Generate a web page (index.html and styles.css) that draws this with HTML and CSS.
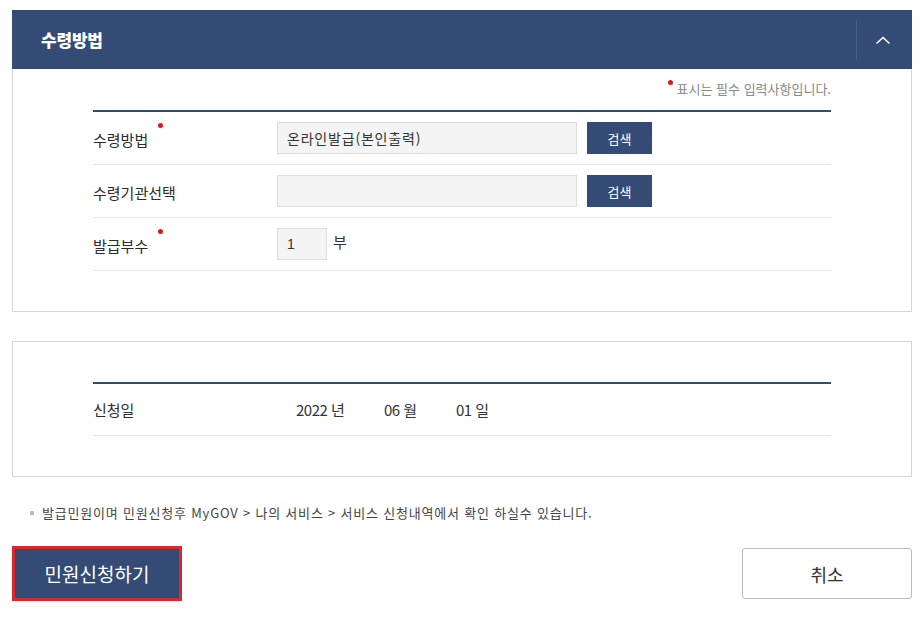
FILE: index.html
```html
<!DOCTYPE html>
<html lang="ko">
<head>
<meta charset="utf-8">
<link rel="stylesheet" href="styles.css">
</head>
<body>
<div class="page">
  <section class="panel">
    <div class="panel-head">
      <h2 class="panel-title">수령방법</h2>
      <div class="toggle">
        <svg width="16" height="10" viewBox="0 0 16 10"><polyline points="1.5,8.5 8,2.5 14.5,8.5" fill="none" stroke="#ffffff" stroke-width="1.6"/></svg>
      </div>
    </div>
    <div class="panel-body">
      <p class="req-note"><span class="dot"></span>표시는 필수 입력사항입니다.</p>
      <div class="form-table">
        <div class="row">
          <div class="label"><span>수령방법</span><span class="dot"></span></div>
          <div class="field">
            <div class="input wide">온라인발급(본인출력)</div>
            <button class="btn-search">검색</button>
          </div>
        </div>
        <div class="row">
          <div class="label"><span>수령기관선택</span></div>
          <div class="field">
            <div class="input wide"></div>
            <button class="btn-search">검색</button>
          </div>
        </div>
        <div class="row">
          <div class="label"><span>발급부수</span><span class="dot"></span></div>
          <div class="field">
            <div class="input small">1</div>
            <span class="unit">부</span>
          </div>
        </div>
      </div>
    </div>
  </section>

  <section class="panel boxed">
    <div class="form-table">
      <div class="row date-row">
        <div class="label"><span>신청일</span></div>
        <div class="field date">
          <span class="dpart y">2022 년</span>
          <span class="dpart m">06 월</span>
          <span class="dpart d">01 일</span>
        </div>
      </div>
    </div>
  </section>

  <p class="info"><span class="sq"></span>발급민원이며 민원신청후 MyGOV &gt; 나의 서비스 &gt; 서비스 신청내역에서 확인 하실수 있습니다.</p>

  <div class="actions">
    <button class="btn-primary">민원신청하기</button>
    <button class="btn-cancel">취소</button>
  </div>
</div>
</body>
</html>
```
FILE: styles.css
```css
* { box-sizing: border-box; }
html, body { margin: 0; padding: 0; background: #ffffff; }
body {
  font-family: "Noto Sans CJK KR", "Noto Sans", sans-serif;
  color: #333333;
}
.page {
  width: 900px;
  margin-left: 12px;
  padding-top: 10px;
}
.panel-head {
  height: 59px;
  background: #344b76;
  display: flex;
  align-items: center;
  justify-content: space-between;
}
.panel-title {
  margin: 0 0 0 29px;
  color: #ffffff;
  font-size: 17px;
  font-weight: 900;
  letter-spacing: -0.2px;
  line-height: 24px;
}
.toggle {
  width: 56px;
  height: 40px;
  border-left: 1px solid #4a5f86;
  display: flex;
  align-items: center;
  justify-content: center;
  padding-right: 4px;
}
.panel-body {
  border: 1px solid #d6d6d6;
  border-top: none;
  padding: 10px 80px 40px 80px;
}
.req-note {
  margin: 0;
  text-align: right;
  font-size: 13px;
  line-height: 20px;
  color: #888888;
}
.req-note .dot { margin-right: 4px; vertical-align: 9px; }
.dot {
  display: inline-block;
  width: 5px;
  height: 5px;
  border-radius: 50%;
  background: #e0141e;
}
.form-table {
  margin-top: 11px;
  border-top: 2px solid #344b76;
}
.row {
  display: flex;
  align-items: center;
  height: 53px;
  border-bottom: 1px solid #e6e6e6;
}
.label {
  width: 184px;
  display: flex;
  align-items: flex-start;
  font-size: 15px;
  line-height: 20px;
  color: #2b2b2b;
  padding-top: 3px;
}
.label .dot { margin-left: 10px; margin-top: -7px; }
.field {
  display: flex;
  align-items: center;
  gap: 10px;
}
.input {
  height: 32px;
  background: #f4f4f4;
  border: 1px solid #dddddd;
  font-size: 14px;
  line-height: 30px;
  padding: 0 9px;
  color: #333333;
}
.input.wide { width: 300px; letter-spacing: 0.8px; }
.input.small { width: 50px; font-family: "Liberation Sans", "Noto Sans CJK KR", sans-serif; }
.unit {
  font-size: 15px;
  margin-left: -4px;
  margin-top: -6px;
}
.btn-search {
  width: 65px;
  height: 32px;
  border: none;
  background: #344b76;
  color: #ffffff;
  font-family: inherit;
  font-size: 13px;
  padding: 0;
}
.boxed {
  margin-top: 29px;
  border: 1px solid #d6d6d6;
  padding: 40px 80px 40px 80px;
}
.boxed .form-table { margin-top: 0; }
.date-row { height: 52px; }
.date-row .label { padding-top: 0; }
.date { gap: 0; }
.dpart {
  font-size: 15px;
  letter-spacing: -0.5px;
  color: #333333;
}
.dpart.y { margin-left: 19px; width: 88px; }
.dpart.m { width: 72px; }
.dpart.d { width: 60px; }
.info {
  margin: 27px 0 0 18px;
  font-size: 13px;
  line-height: 18px;
  color: #444444;
  letter-spacing: 0.8px;
  display: flex;
  align-items: center;
}
.sq {
  display: inline-block;
  width: 4px;
  height: 4px;
  background: #bbbbbb;
  margin-right: 8px;
}
.actions {
  margin-top: 24px;
  display: flex;
  justify-content: space-between;
  align-items: center;
}
.btn-primary {
  width: 170px;
  height: 55px;
  background: #344b76;
  border: 3px solid #d7282f;
  color: #ffffff;
  font-family: inherit;
  font-size: 19px;
  padding: 0;
}
.btn-cancel {
  width: 170px;
  height: 51px;
  background: #ffffff;
  border: 1px solid #bbbbbb;
  border-radius: 3px;
  color: #333333;
  font-family: inherit;
  font-size: 18px;
  padding: 0;
}
```
